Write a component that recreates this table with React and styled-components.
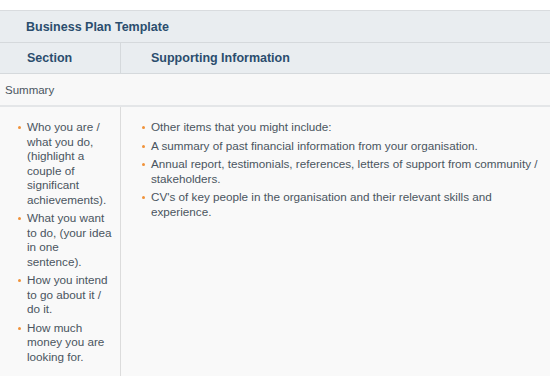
import styled, { createGlobalStyle } from 'styled-components';

const GlobalStyle = createGlobalStyle`
  html, body {
    margin: 0;
    padding: 0;
    background: #ffffff;
  }
  body {
    font-family: "Liberation Sans", Arial, sans-serif;
  }
`;

const sectionItems = [
  'Who you are / what you do, (highlight a couple of significant achievements).',
  'What you want to do, (your idea in one sentence).',
  'How you intend to go about it / do it.',
  'How much money you are looking for.',
];

const supportItems = [
  'Other items that you might include:',
  'A summary of past financial information from your organisation.',
  'Annual report, testimonials, references, letters of support from community / stakeholders.',
  "CV's of key people in the organisation and their relevant skills and experience.",
];

const App = () => {
  return (
    <Page>
      <GlobalStyle />
      <Table>
        <TitleRow>Business Plan Template</TitleRow>
        <HeaderRow>
          <HeadCell>Section</HeadCell>
          <HeadCell $divider>Supporting Information</HeadCell>
        </HeaderRow>
        <GroupRow>Summary</GroupRow>
        <BodyRow>
          <BodyCell>
            <BulletList>
              {sectionItems.map((item) => (
                <Bullet key={item}>{item}</Bullet>
              ))}
            </BulletList>
          </BodyCell>
          <BodyCell $divider>
            <BulletList $wide>
              {supportItems.map((item) => (
                <Bullet key={item}>{item}</Bullet>
              ))}
            </BulletList>
          </BodyCell>
        </BodyRow>
      </Table>
    </Page>
  );
};

const Page = styled.div`
  padding-top: 10px;
  height: 376px;
  box-sizing: border-box;
  overflow: hidden;
`;

const Table = styled.div`
  display: flex;
  flex-direction: column;
  border-top: 1px solid #d9dcdf;
`;

const TitleRow = styled.div`
  height: 31px;
  display: flex;
  align-items: center;
  padding-left: 26px;
  background: #e9edf0;
  border-bottom: 1px solid #d5d9dc;
  color: #2b4d6e;
  font-weight: bold;
  font-size: 12.5px;
`;

const HeaderRow = styled.div`
  display: grid;
  grid-template-columns: 120px 1fr;
  height: 30px;
  background: #e9edf0;
  border-bottom: 1px solid #d5d9dc;
`;

const HeadCell = styled.div`
  display: flex;
  align-items: center;
  padding-left: ${(p) => (p.$divider ? '30px' : '27px')};
  border-left: ${(p) => (p.$divider ? '1px solid #d5d9dc' : 'none')};
  color: #2b4d6e;
  font-weight: bold;
  font-size: 12.5px;
`;

const GroupRow = styled.div`
  height: 31px;
  display: flex;
  align-items: center;
  padding-left: 5px;
  background: #f8f8f8;
  border-bottom: 2px solid #e4e6e8;
  color: #4a5560;
  font-size: 11.5px;
`;

const BodyRow = styled.div`
  display: grid;
  grid-template-columns: 120px 1fr;
  background: #f9f9f9;
  min-height: 280px;
`;

const BodyCell = styled.div`
  border-left: ${(p) => (p.$divider ? '1px solid #dcdcdc' : 'none')};
  padding: 13px 6px 10px 0;
`;

const BulletList = styled.ul`
  list-style: none;
  margin: 0;
  padding: 0 0 0 ${(p) => (p.$wide ? '30px' : '27px')};
`;

const Bullet = styled.li`
  position: relative;
  margin-bottom: 4px;
  color: #4a5560;
  font-size: 11.7px;
  line-height: 14.5px;
  &::before {
    content: '';
    position: absolute;
    left: -9px;
    top: 6px;
    width: 3px;
    height: 3px;
    border-radius: 50%;
    background: #f0923a;
  }
`;

export default App;
